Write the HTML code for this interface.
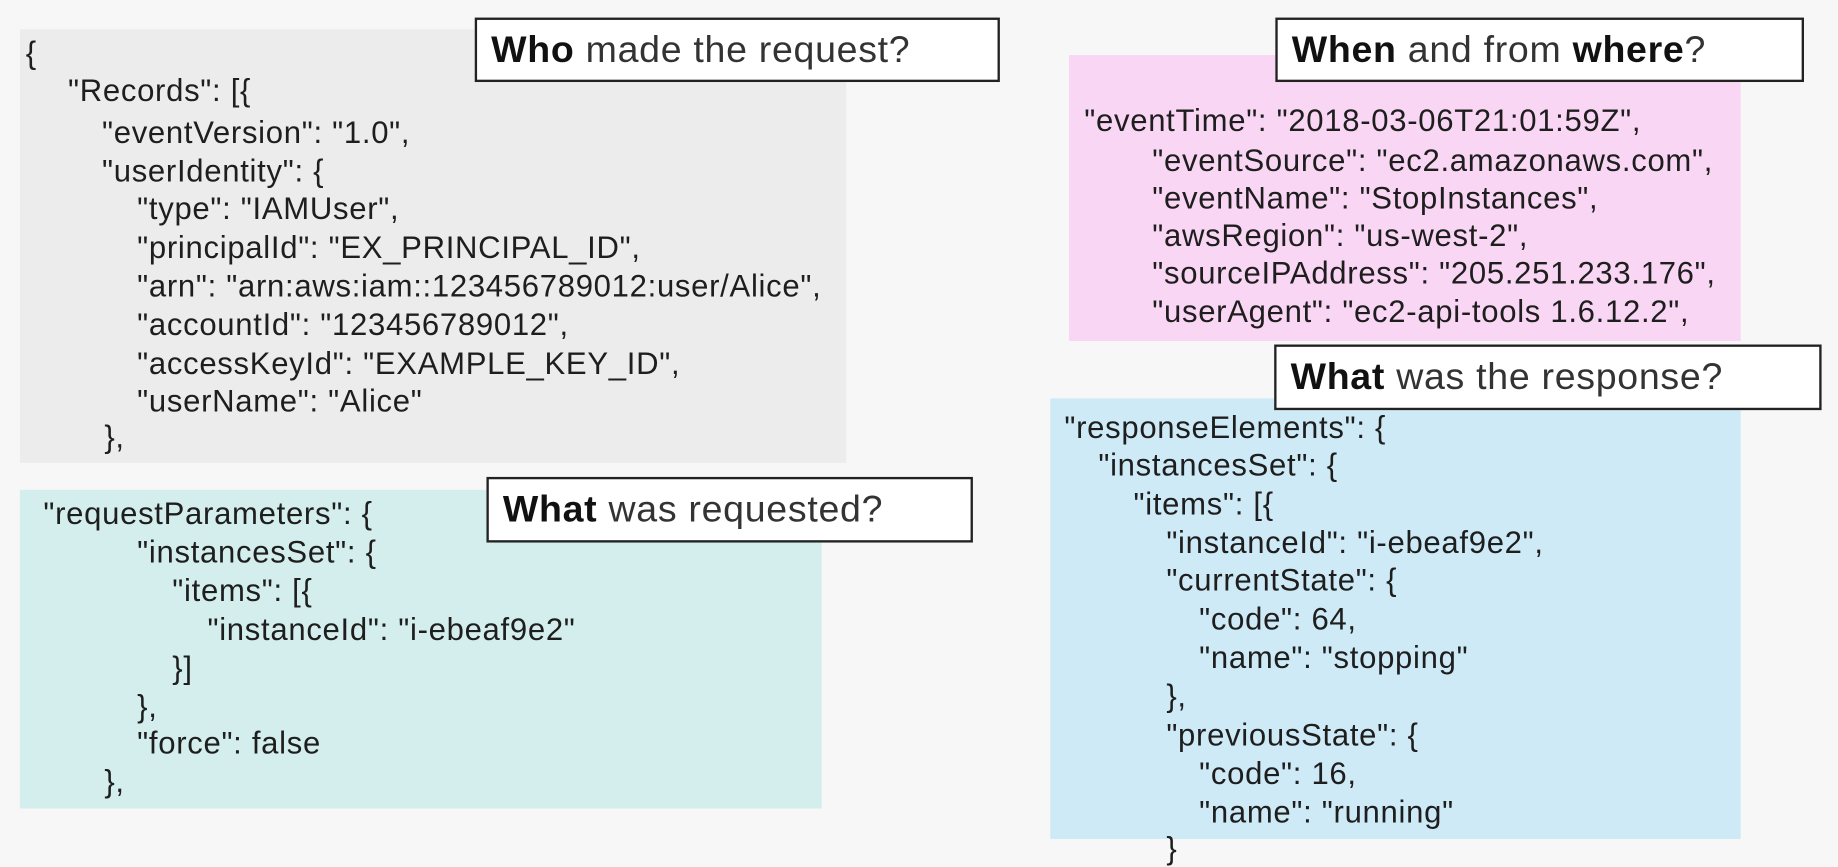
<!DOCTYPE html>
<html><head><meta charset="utf-8"><style>
html,body{margin:0;padding:0;width:1838px;height:839px;overflow:hidden;background:#f7f7f7;}
#w{position:absolute;left:0;top:0;width:1568px;height:716px;transform:scale(1.17219,1.17179);transform-origin:0 0;font-family:"Liberation Sans",sans-serif;color:#1e1e1e;}
.b{position:absolute;}
.l{position:absolute;font-size:26.5px;line-height:32px;white-space:pre;letter-spacing:0.6px;}
.t{position:absolute;background:#fff;border:2px solid #222;box-sizing:border-box;font-size:32px;line-height:50px;padding-left:12px;color:#333;white-space:nowrap;letter-spacing:0.6px;}
.t b{color:#111;font-weight:bold;}
</style></head><body><div id="w">
<div class="b" style="left:17px;top:25px;width:705px;height:370px;background:#ececec"></div>
<div class="b" style="left:17px;top:418px;width:684px;height:272px;background:#d3eeec"></div>
<div class="b" style="left:912px;top:47px;width:573px;height:244px;background:#f9d6f4"></div>
<div class="b" style="left:896px;top:340px;width:589px;height:376px;background:#cdeaf6"></div>

<div class="l" style="left:22px;top:29px">{</div>
<div class="l" style="left:58px;top:61px">"Records": [{</div>
<div class="l" style="left:87px;top:97px">"eventVersion": "1.0",</div>
<div class="l" style="left:87px;top:130px">"userIdentity": {</div>
<div class="l" style="left:117px;top:162px">"type": "IAMUser",</div>
<div class="l" style="left:117px;top:195px">"principalId": "EX_PRINCIPAL_ID",</div>
<div class="l" style="left:117px;top:228px">"arn": "arn:aws:iam::123456789012:user/Alice",</div>
<div class="l" style="left:117px;top:261px">"accountId": "123456789012",</div>
<div class="l" style="left:117px;top:294px">"accessKeyId": "EXAMPLE_KEY_ID",</div>
<div class="l" style="left:117px;top:326px">"userName": "Alice"</div>
<div class="l" style="left:89px;top:357px">},</div>

<div class="l" style="left:37px;top:422px">"requestParameters": {</div>
<div class="l" style="left:117px;top:455px">"instancesSet": {</div>
<div class="l" style="left:147px;top:488px">"items": [{</div>
<div class="l" style="left:177px;top:521px">"instanceId": "i-ebeaf9e2"</div>
<div class="l" style="left:147px;top:554px">}]</div>
<div class="l" style="left:117px;top:587px">},</div>
<div class="l" style="left:117px;top:618px">"force": false</div>
<div class="l" style="left:89px;top:651px">},</div>

<div class="l" style="left:925px;top:87px">"eventTime": "2018-03-06T21:01:59Z",</div>
<div class="l" style="left:983px;top:121px">"eventSource": "ec2.amazonaws.com",</div>
<div class="l" style="left:983px;top:153px">"eventName": "StopInstances",</div>
<div class="l" style="left:983px;top:185px">"awsRegion": "us-west-2",</div>
<div class="l" style="left:983px;top:217px">"sourceIPAddress": "205.251.233.176",</div>
<div class="l" style="left:983px;top:250px">"userAgent": "ec2-api-tools 1.6.12.2",</div>

<div class="l" style="left:908px;top:349px">"responseElements": {</div>
<div class="l" style="left:937px;top:381px">"instancesSet": {</div>
<div class="l" style="left:967px;top:414px">"items": [{</div>
<div class="l" style="left:995px;top:447px">"instanceId": "i-ebeaf9e2",</div>
<div class="l" style="left:995px;top:479px">"currentState": {</div>
<div class="l" style="left:1023px;top:512px">"code": 64,</div>
<div class="l" style="left:1023px;top:545px">"name": "stopping"</div>
<div class="l" style="left:995px;top:578px">},</div>
<div class="l" style="left:995px;top:611px">"previousState": {</div>
<div class="l" style="left:1023px;top:644px">"code": 16,</div>
<div class="l" style="left:1023px;top:677px">"name": "running"</div>
<div class="l" style="left:995px;top:708px">}</div>

<div class="t" style="left:405px;top:15px;width:448px;height:55px"><b>Who</b> made the request?</div>
<div class="t" style="left:1088px;top:15px;width:451px;height:55px"><b>When</b> and from <b>where</b>?</div>
<div class="t" style="left:1087px;top:294px;width:467px;height:56px"><b>What</b> was the response?</div>
<div class="t" style="left:415px;top:407px;width:415px;height:56px"><b>What</b> was requested?</div>
</div></body></html>
